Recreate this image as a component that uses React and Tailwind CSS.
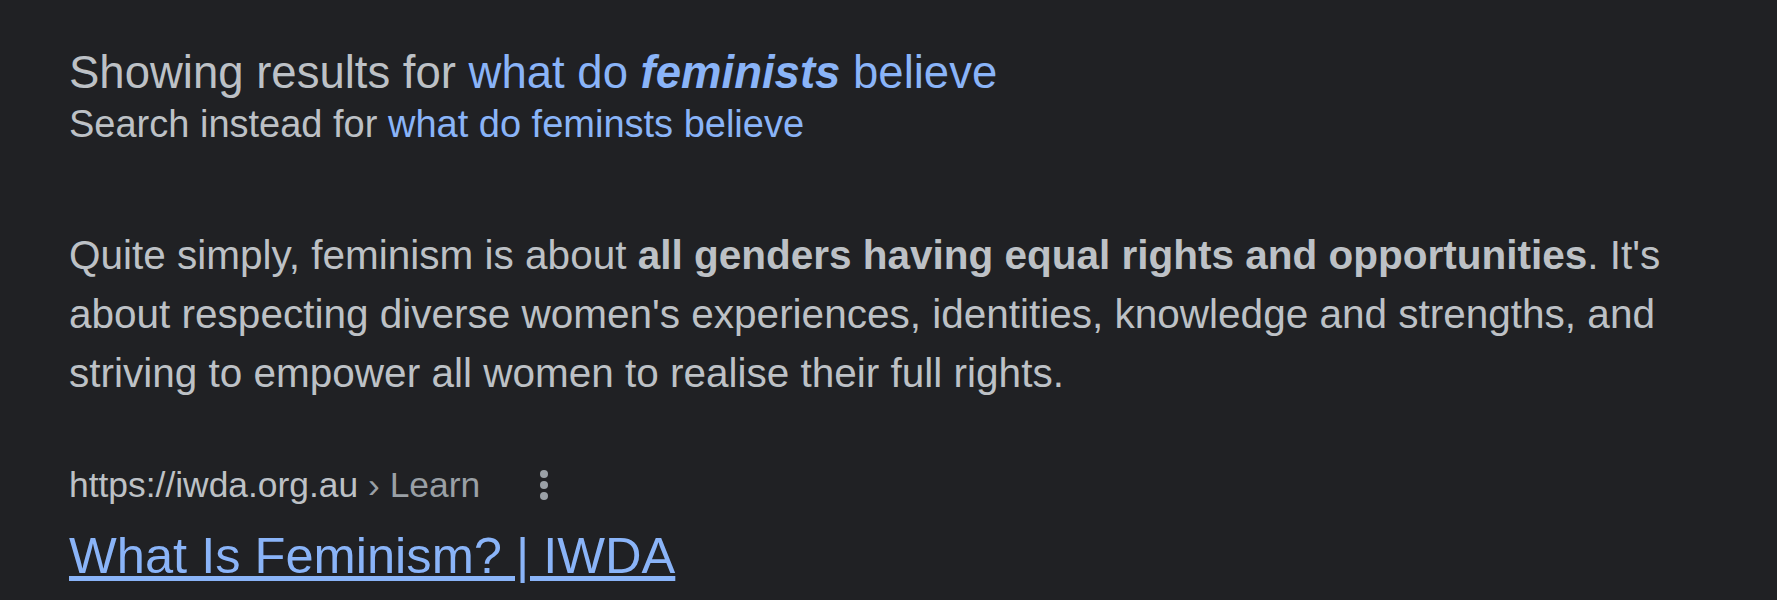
import React from "react";

function MoreIcon() {
  return (
    <svg width="10" height="34" viewBox="0 0 10 34" className="shrink-0">
      <circle cx="5" cy="6" r="4" fill="#9aa0a6" />
      <circle cx="5" cy="17" r="4" fill="#9aa0a6" />
      <circle cx="5" cy="28" r="4" fill="#9aa0a6" />
    </svg>
  );
}

export default function App() {
  return (
    <div className="w-full h-[600px] overflow-hidden bg-[#202124] font-['Liberation_Sans',Arial,sans-serif] text-[#bdc1c6]">
      <div className="pl-[69px] pt-[47px] w-[1699px]">
        <div>
          <p className="text-[45.5px] leading-[52px] whitespace-nowrap">
            Showing results for{" "}
            <a className="text-[#8ab4f8] cursor-pointer">
              what do <b className="italic font-bold">feminists</b> believe
            </a>
          </p>
          <p className="text-[38px] leading-[50px] whitespace-nowrap">
            Search instead for <a className="text-[#8ab4f8] cursor-pointer">what do feminsts believe</a>
          </p>
        </div>

        <p className="mt-[77px] text-[40.5px] leading-[59px]">
          Quite simply, feminism is about <b className="font-bold">all genders having equal rights and opportunities</b>. It's
          about respecting diverse women's experiences, identities, knowledge and strengths, and striving to empower all
          women to realise their full rights.
        </p>

        <div className="mt-[62px] flex items-center">
          <span className="text-[35.4px] leading-[40px] whitespace-nowrap">
            https://iwda.org.au <span className="text-[#9aa0a6]">› Learn</span>
          </span>
          <span className="ml-[59px] flex items-center">
            <MoreIcon />
          </span>
        </div>

        <div className="mt-[22px]">
          <a className="text-[50.6px] leading-[58px] text-[#8ab4f8] underline whitespace-nowrap cursor-pointer">
            What Is Feminism? | IWDA
          </a>
        </div>
      </div>
    </div>
  );
}
